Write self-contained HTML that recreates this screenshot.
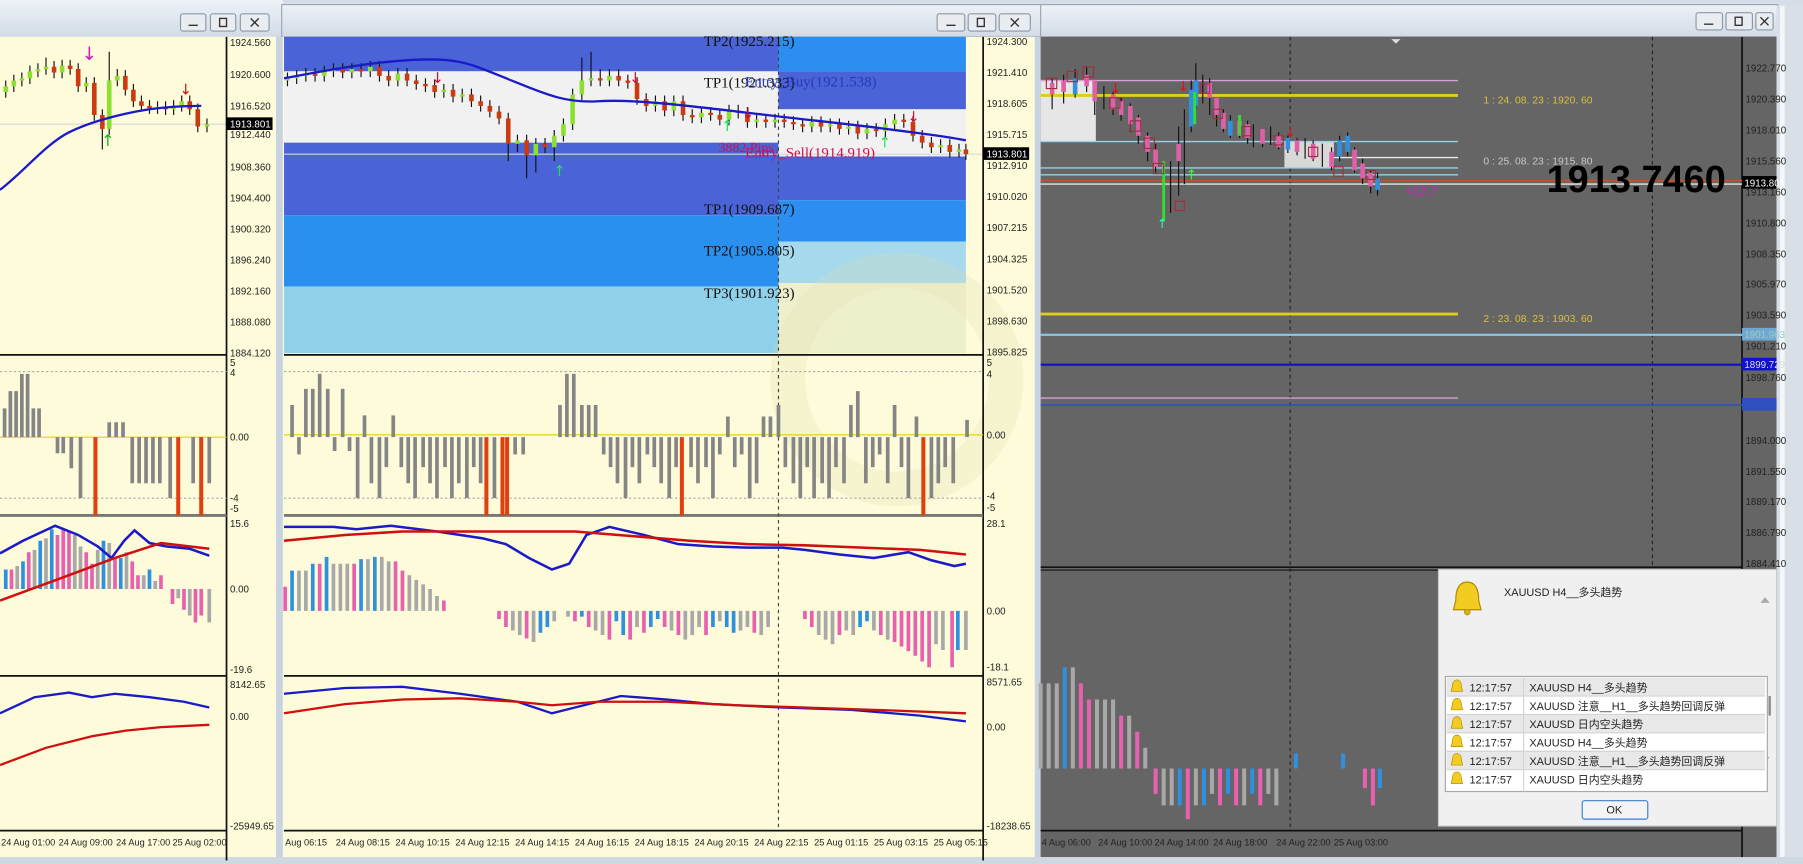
<!DOCTYPE html>
<html><head><meta charset="utf-8"><style>
html,body{margin:0;padding:0;width:1803px;height:864px;overflow:hidden;background:#d6dde6}
svg{display:block}
.ax{font-family:"Liberation Sans",sans-serif;font-size:8.5px;fill:#222}
.tl{font-family:"Liberation Sans",sans-serif;font-size:8px;fill:#222}
.tp{font-family:"Liberation Serif",serif;font-size:13px;fill:#111}
.al{font-family:"Liberation Sans","Noto Sans CJK SC",sans-serif;font-size:9.5px;fill:#222}
</style></head><body>
<svg width="1803" height="864" viewBox="0 0 1568 751" preserveAspectRatio="none" xmlns="http://www.w3.org/2000/svg">
<defs><linearGradient id="tb" x1="0" y1="0" x2="0" y2="1"><stop offset="0" stop-color="#eef2f7"/><stop offset="1" stop-color="#d2dbe6"/></linearGradient></defs>
<rect width="1568" height="751" fill="#d6dde6"/>
<rect x="0" y="0" width="246" height="32" fill="url(#tb)"/>
<rect x="245" y="4" width="661" height="28" fill="url(#tb)" stroke="#9aa6b4"/>
<rect x="905" y="4" width="641" height="28" fill="url(#tb)" stroke="#9aa6b4"/>
<g fill="#e9edf2" stroke="#8d98a6">
<rect x="157" y="12" width="22" height="15" rx="2"/><rect x="183" y="12" width="22" height="15" rx="2"/><rect x="209" y="12" width="25" height="15" rx="2"/>
<rect x="815" y="12" width="24" height="15" rx="2"/><rect x="842" y="12" width="24" height="15" rx="2"/><rect x="869" y="12" width="27" height="15" rx="2"/>
<rect x="1475" y="11" width="23" height="15" rx="2"/><rect x="1501" y="11" width="23" height="15" rx="2"/><rect x="1527" y="11" width="15" height="15" rx="2"/>
</g>
<g stroke="#333" stroke-width="1.2" fill="none">
<path d="M164 22h8M823 22h8M1482 21h8"/><rect x="191" y="16" width="6" height="7"/><rect x="850" y="16" width="6" height="7"/><rect x="1509" y="15" width="6" height="7"/>
<path d="M218 16l7 7M225 16l-7 7M879 16l7 7M886 16l-7 7M1531 15l7 7M1538 15l-7 7"/>
</g>
<rect x="0" y="32" width="240" height="716" fill="#fdfbd9"/>
<rect x="240" y="32" width="6" height="716" fill="#c9d4e2"/>
<rect x="246" y="32" width="654" height="716" fill="#fdfbd9"/>
<rect x="900" y="32" width="5" height="716" fill="#c9d4e2"/>
<rect x="905" y="32" width="640" height="713" fill="#656565"/>
<rect x="1545" y="5" width="23" height="746" fill="#d9dfe7"/>
<rect x="1548" y="5" width="4" height="740" fill="#f4f6f8"/>
<rect x="0" y="745" width="1568" height="6" fill="#cfd7e1"/>
<rect x="247" y="32" width="430" height="30" fill="#4a64d8"/>
<rect x="247" y="62" width="430" height="62" fill="#f1f1f1"/>
<rect x="247" y="124" width="430" height="63" fill="#4a64d8"/>
<rect x="247" y="187" width="430" height="62" fill="#2a90ee"/>
<rect x="247" y="249" width="430" height="58" fill="#8fd1ea"/>
<rect x="677" y="32" width="163" height="30" fill="#2c8ef0"/>
<rect x="677" y="62" width="163" height="33" fill="#4a64d8"/>
<rect x="677" y="95" width="163" height="41" fill="#f1f1f1"/>
<rect x="677" y="136" width="163" height="38" fill="#4a64d8"/>
<rect x="677" y="174" width="163" height="36" fill="#2c8ef0"/>
<rect x="677" y="210" width="163" height="36" fill="#a6d9ec"/>
<rect x="677" y="246" width="163" height="61" fill="#eef0cc"/>
<path d="M247 134H855M0 108H197" stroke="#d8d8d8" stroke-width="1"/>
<circle cx="780" cy="330" r="95" fill="none" stroke="#e2e0b0" stroke-width="30" opacity="0.25"/>
<g stroke="#111" stroke-width="1.5">
<path d="M0 308.5H197M247 308.5H855M0 587.5H197M247 587.5H855M0 722H197M247 722H855M197 32V748M855 32V748M1515 32V745M905 493H1515M905 722H1515"/>
</g>
<path d="M0 448H197M247 448H855" stroke="#777" stroke-width="2.5"/>
<path d="M905 495.5H1515" stroke="#111" stroke-width="1"/>
<path d="M677 32V722" stroke="#444" stroke-dasharray="3,3"/>
<path d="M1122 32V722M1437 32V493" stroke="#222" stroke-dasharray="3,3"/>
<path d="M0 323H197M0 433H197M247 323H855M247 433H855" stroke="#aaa" stroke-dasharray="2,2"/>
<path d="M0 380H197M247 378H855" stroke="#e6d400" stroke-width="1"/>
<path d="M5 70V85M12 65V80M19 63V75M26 57V73M33 55V67M40 50V65M47 53V68M54 52V68M61 52V65M68 55V80M75 67V80M82 67V105M89 95V130M95 45V117M102 60V75M109 61V83M116 73V93M123 83V97M130 87V99M137 88V99M144 88V100M151 87V100M158 83V97M165 83V100M172 90V115M180 103V115" stroke="#111" stroke-width="1"/>
<path d="M47 58V63M61 57V60M68 60V75M82 72V100M89 100V112M109 66V78M116 78V88M123 88V92M130 92V94M144 93V95M165 88V95M172 95V110" stroke="#cc3a10" stroke-width="4"/>
<path d="M5 75V80M12 70V75M19 68V70M26 62V68M33 60V62M40 58V60M54 57V63M75 72V75M95 70V112M102 66V70M137 93V95M151 92V95M158 88V92M180 108V110" stroke="#8ee030" stroke-width="4"/>
<path d="M0 165C20 150 40 125 60 115S110 98 130 95 170 92 175 92" stroke="#1a1ac8" stroke-width="2" fill="none"/>
<text x="71" y="52" font-size="16" fill="#e010c0" font-family="DejaVu Sans">↓</text>
<text x="156" y="82" font-size="13" fill="#d01010" font-family="DejaVu Sans">↓</text>
<text x="88" y="127" font-size="14" fill="#20b020" font-family="DejaVu Sans">↑</text>
<path d="M250 63V75M258 61V73M266 59V71M274 59V71M282 57V71M290 55V67M298 55V68M306 55V68M314 55V67M322 53V67M330 53V71M338 61V75M346 59V75M354 59V75M362 65V78M370 68V80M378 69V85M386 73V85M394 73V89M402 77V89M410 77V93M418 83V97M426 87V102M434 92V108M442 98V140M450 117V132M458 117V155M466 120V150M474 120V133M482 113V140M490 103V123M498 77V113M506 50V87M514 45V75M522 60V75M530 60V75M538 60V75M546 65V77M554 67V91M562 81V97M570 83V97M578 83V101M586 83V101M594 83V105M602 95V107M610 93V107M618 93V105M626 95V109M634 91V109M642 91V103M650 93V111M658 99V111M666 99V111M674 99V111M682 99V111M690 101V113M698 103V115M706 101V115M714 101V115M722 103V115M730 103V117M738 105V117M746 105V121M754 107V121M762 107V119M770 103V119M778 99V113M786 99V111M794 101V123M802 113V129M810 119V133M818 121V133M826 121V137M834 125V137M840 125V139" stroke="#111" stroke-width="1"/>
<path d="M274 64V66M298 60V63M314 60V62M330 58V66M338 66V70M354 64V70M362 70V73M370 73V75M378 74V80M394 78V84M410 82V88M418 88V92M426 92V97M434 97V103M442 103V125M458 122V135M474 125V128M522 68V70M538 66V70M546 70V72M554 72V86M562 86V92M578 88V96M594 88V100M602 100V102M618 98V100M626 100V104M642 96V98M650 98V106M666 104V106M682 104V106M690 106V108M698 108V110M714 106V110M730 108V112M746 110V116M762 112V114M786 104V106M794 106V118M802 118V124M810 124V128M826 126V132M840 130V134" stroke="#cc3a10" stroke-width="4"/>
<path d="M250 68V70M258 66V68M266 64V66M282 62V66M290 60V62M306 60V63M322 58V62M346 64V70M386 78V80M402 82V84M450 122V125M466 125V135M482 118V128M490 108V118M498 82V108M506 70V82M514 68V70M530 66V70M570 88V92M586 88V96M610 98V102M634 96V104M658 104V106M674 104V106M706 106V110M722 108V110M738 110V112M754 112V116M770 108V114M778 104V108M818 126V128M834 130V132" stroke="#8ee030" stroke-width="4"/>
<path d="M247 68C280 62 320 54 360 52S410 56 440 68 490 90 520 88 600 92 650 98 740 108 770 112 820 118 840 122" stroke="#1a1ac8" stroke-width="2" fill="none"/>
<text x="375" y="72" font-size="13" fill="#d01030" font-family="DejaVu Sans">↓</text>
<text x="547" y="72" font-size="13" fill="#d01030" font-family="DejaVu Sans">↓</text>
<text x="645" y="103" font-size="13" fill="#d01030" font-family="DejaVu Sans">↓</text>
<text x="789" y="106" font-size="13" fill="#d01030" font-family="DejaVu Sans">↓</text>
<text x="481" y="153" font-size="13" fill="#20e060" font-family="DejaVu Sans">↑</text>
<text x="627" y="114" font-size="13" fill="#20e060" font-family="DejaVu Sans">↑</text>
<text x="764" y="128" font-size="13" fill="#20e060" font-family="DejaVu Sans">↑</text>
<text class="tp" x="612" y="40">TP2(1925.215)</text>
<text class="tp" x="612" y="76">TP1(1921.333)</text>
<text class="tp" x="648" y="75" style="fill:#2838b8">Entry_Buy(1921.538)</text>
<text class="tp" x="625" y="132" style="fill:#d0104a;font-size:12px">3882 Pips</text>
<text class="tp" x="648" y="137" style="fill:#d0104a">Entry_Sell(1914.919)</text>
<text class="tp" x="612" y="186">TP1(1909.687)</text>
<text class="tp" x="612" y="222">TP2(1905.805)</text>
<text class="tp" x="612" y="259">TP3(1901.923)</text>
<path d="M4 380V355M9 380V340M14 380V340M19 380V325M24 380V325M29 380V355M34 380V355M50 380V394M55 380V394M62 380V407M70 380V433M95 380V367M101 380V367M107 380V367M115 380V420M121 380V420M127 380V420M133 380V420M139 380V420M148 380V433M168 380V420M182 380V420M254 380V352M260 380V395M266 380V338M272 380V338M278 380V325M285 380V338M291 380V392M298 380V338M304 380V392M311 380V433M317 380V361M323 380V420M330 380V433M336 380V406M342 380V361M349 380V406M355 380V420M361 380V433M368 380V406M374 380V420M380 380V433M387 380V406M393 380V433M399 380V420M406 380V433M412 380V406M418 380V420M430 380V433M448 380V395M455 380V395M487 380V352M493 380V325M499 380V325M506 380V352M512 380V352M518 380V352M525 380V395M531 380V406M537 380V420M544 380V433M550 380V406M556 380V420M563 380V395M569 380V406M575 380V420M582 380V433M588 380V406M601 380V406M607 380V420M614 380V406M620 380V433M626 380V395M633 380V362M639 380V406M645 380V395M652 380V433M658 380V420M664 380V362M670 380V362M677 380V352M683 380V406M690 380V420M696 380V433M702 380V406M708 380V433M715 380V420M721 380V433M727 380V406M734 380V420M740 380V352M746 380V340M753 380V420M759 380V406M765 380V395M772 380V420M778 380V352M784 380V406M790 380V433M797 380V362M810 380V433M816 380V420M822 380V406M829 380V420M841 380V365" stroke="#858585" stroke-width="3.2"/>
<path d="M83 380V448M155 380V448M175 380V448M423 380V448M437 380V448M441 380V448M593 380V448M803 380V448" stroke="#e04010" stroke-width="3.5"/>
<g stroke-width="3.2">
<path d="M5 512V495M20 512V488M35 512V470M45 512V460M90 512V470M105 512V485M130 512V495" stroke="#3090e0"/>
<path d="M10 512V495M25 512V480M50 512V465M55 512V460M60 512V462M75 512V480M80 512V490M100 512V485M115 512V488M120 512V500M140 512V500M150 512V525M160 512V530M170 512V541M175 512V535" stroke="#e860b0"/>
<path d="M15 512V492M30 512V478M40 512V468M65 512V465M70 512V475M85 512V478M95 512V472M110 512V480M125 512V500M135 512V505M155 512V520M165 512V535M182 512V541" stroke="#a8a8a8"/>
</g>
<polyline points="0,481 20,470 48,457 68,465 85,475 97,485 108,470 117,461 130,472 145,475 165,477 182,483" stroke="#1a1ac8" stroke-width="2.2" fill="none"/>
<polyline points="0,522 60,500 100,485 140,472 182,477" stroke="#d01010" stroke-width="2.2" fill="none"/>
<g stroke-width="3.2">
<path d="M254 531V496M272 531V490M284 531V484M314 531V486M326 531V484M470 531V550M476 531V545M506 531V536M536 531V540M542 531V552M566 531V545M572 531V538M620 531V545M632 531V545M638 531V550M748 531V545M754 531V540M833 531V565" stroke="#3090e0"/>
<path d="M248 531V510M278 531V490M308 531V490M344 531V488M350 531V496M386 531V522M434 531V538M440 531V545M458 531V555M500 531V540M512 531V545M530 531V556M548 531V556M560 531V550M578 531V545M590 531V552M614 531V552M656 531V550M700 531V538M706 531V545M730 531V552M766 531V552M778 531V558M784 531V562M790 531V566M796 531V570M802 531V575M808 531V580M828 531V580" stroke="#e860b0"/>
<path d="M260 531V496M266 531V496M290 531V490M296 531V490M302 531V490M320 531V486M332 531V484M338 531V488M356 531V500M362 531V504M368 531V508M374 531V512M380 531V518M446 531V548M452 531V552M464 531V558M482 531V540M494 531V536M518 531V548M524 531V552M554 531V545M584 531V548M596 531V556M602 531V552M608 531V545M626 531V540M644 531V548M650 531V545M662 531V552M668 531V545M712 531V552M718 531V556M724 531V560M736 531V548M742 531V552M760 531V548M772 531V556M814 531V560M820 531V565M840 531V565" stroke="#a8a8a8"/>
</g>
<polyline points="247,458 290,458 310,460 340,457 380,462 420,468 440,473 460,485 480,495 495,490 510,465 530,458 560,465 590,473 620,475 650,476 680,476 700,478 730,482 760,485 790,480 810,487 830,492 840,490" stroke="#1a1ac8" stroke-width="2.2" fill="none"/>
<polyline points="247,470 300,465 350,462 450,462 500,462 550,466 600,470 650,473 700,474 750,476 800,478 840,482" stroke="#d01010" stroke-width="2.2" fill="none"/>
<polyline points="0,620 30,606 60,602 80,606 100,603 130,606 160,610 182,615" stroke="#1a1ac8" stroke-width="2" fill="none"/>
<polyline points="0,665 40,650 80,640 110,635 140,632 182,630" stroke="#d01010" stroke-width="2" fill="none"/>
<polyline points="247,603 300,598 350,597 400,603 450,610 480,620 500,615 540,605 580,608 620,612 680,615 740,617 800,622 840,627" stroke="#1a1ac8" stroke-width="2" fill="none"/>
<polyline points="247,620 300,612 350,608 400,607 450,610 480,613 520,610 580,610 640,613 700,615 760,617 840,620" stroke="#d01010" stroke-width="2" fill="none"/>
<rect x="905" y="70" width="48" height="53" fill="#e6e6e6"/>
<rect x="1117" y="123" width="43" height="23" fill="#d8d8d8"/>
<g stroke-width="1.2">
<path d="M905 70H1268" stroke="#d8a0d8"/>
<path d="M905 83H1268M905 273H1268" stroke="#e0cc20" stroke-width="2.5"/>
<path d="M905 123H1268M905 146H1268M905 152H1268" stroke="#9ad0e8"/>
<path d="M1160 137H1268M905 160H1515" stroke="#e8e8e8"/>
<path d="M905 157H1545" stroke="#c05030" stroke-width="1.8"/>
<path d="M905 291H1545" stroke="#8cc8e8" stroke-width="1.8"/>
<path d="M905 317H1545" stroke="#1010c0" stroke-width="1.8"/>
<path d="M905 346H1268" stroke="#d8a0d8"/>
<path d="M905 352H1545" stroke="#3050c0" stroke-width="1.5"/>
</g>
<path d="M915 68V95M925 65V90M935 60V85M945 58V80M952 70V100M960 75V95M968 80V100M975 85V105M983 90V115M990 100V125M998 115V140M1005 125V150M1018 140V185M1025 110V170M1030 95V160M1036 70V115M1040 55V95M1046 65V90M1052 68V100M1058 85V110M1064 95V115M1070 100V120M1078 102V120M1085 105V125M1090 108V128M1098 112V128M1105 110V126M1112 115V130M1120 118V133M1128 120V135M1135 120V138M1142 122V140M1150 125V145M1158 128V148M1165 118V140M1172 115V136M1178 128V150M1185 138V160M1192 148V168M1198 150V170" stroke="#111" stroke-width="1"/>
<path d="M915 72V82M925 70V80M945 65V75M952 70V88M968 82V95M975 88V100M983 92V108M990 102V118M998 118V132M1005 130V145M1025 125V140M1052 72V85M1058 85V100M1064 98V112M1078 105V118M1085 108V120M1098 112V125M1112 118V128M1128 122V132M1142 125V138M1158 132V145M1178 130V148M1185 142V155M1192 150V162" stroke="#e060a8" stroke-width="4"/>
<path d="M935 68V82M1036 78V110M1040 70V92M1070 105V118M1120 120V130M1165 122V136M1172 118V132M1198 155V165" stroke="#3090e0" stroke-width="4"/>
<path d="M1012 140V192M1039 80V108M1078 100V118" stroke="#30e030" stroke-width="2.5"/>
<g fill="none" stroke="#a03040" stroke-width="1">
<rect x="910" y="68" width="9" height="9"/><rect x="928" y="62" width="9" height="9"/><rect x="942" y="58" width="9" height="9"/><rect x="965" y="85" width="9" height="9"/><rect x="983" y="105" width="9" height="9"/><rect x="995" y="120" width="9" height="9"/><rect x="1003" y="142" width="9" height="9"/><rect x="1022" y="175" width="8" height="8"/><rect x="1044" y="73" width="8" height="8"/><rect x="1055" y="95" width="8" height="8"/><rect x="1080" y="110" width="8" height="8"/><rect x="1108" y="118" width="8" height="8"/><rect x="1138" y="128" width="8" height="8"/><rect x="1160" y="145" width="8" height="8"/><rect x="1188" y="148" width="8" height="8"/>
</g>
<text x="965" y="81" font-size="12" fill="#e01010" font-family="DejaVu Sans">↓</text>
<text x="1024" y="79" font-size="12" fill="#e01010" font-family="DejaVu Sans">↓</text>
<text x="1117" y="119" font-size="12" fill="#e01010" font-family="DejaVu Sans">↓</text>
<text x="1031" y="156" font-size="12" fill="#30ff30" font-family="DejaVu Sans">↑</text>
<text x="1006" y="198" font-size="11" fill="#30ffb0" font-family="DejaVu Sans">↑</text>
<text x="1290" y="90" font-family="Liberation Sans" font-size="9" fill="#d8c040">1 : 24. 08. 23 : 1920. 60</text>
<text x="1290" y="143" font-family="Liberation Sans" font-size="9" fill="#c8c8c8">0 : 25. 08. 23 : 1915. 80</text>
<text x="1290" y="280" font-family="Liberation Sans" font-size="9" fill="#d8c040">2 : 23. 08. 23 : 1903. 60</text>
<text x="1222" y="170" font-family="Liberation Sans" font-size="11" fill="#d020d0">&lt;12.7</text>
<text x="1345" y="167" font-family="Liberation Sans" font-size="33" font-weight="bold" fill="#000">1913.7460</text>
<path d="M1210 34l4 4 4-4z" fill="#ddd"/>
<g stroke-width="3.5">
<path d="M905 668V594M912 668V594M919 668V594M933 668V580M954 668V608M961 668V608M968 668V608M982 668V622M996 668V650M1012 668V700M1019 668V700M1040 668V700M1054 668V690M1082 668V700M1103 668V690M1110 668V700" stroke="#a8a8a8"/>
<path d="M926 668V580M1026 668V700M1047 668V700M1068 668V690M1089 668V690M1127 668V655M1168 668V655M1200 668V685" stroke="#3090e0"/>
<path d="M940 668V594M947 668V608M975 668V622M989 668V636M1005 668V690M1033 668V712M1061 668V700M1075 668V700M1096 668V700M1187 668V685M1194 668V700" stroke="#e860b0"/>
</g>
<g class="ax">
<text x="200" y="40">1924.560</text><text x="200" y="68">1920.600</text><text x="200" y="95">1916.520</text><text x="200" y="120">1912.440</text><text x="200" y="148">1908.360</text><text x="200" y="175">1904.400</text><text x="200" y="202">1900.320</text><text x="200" y="229">1896.240</text><text x="200" y="256">1892.160</text><text x="200" y="283">1888.080</text><text x="200" y="310">1884.120</text>
<text x="200" y="318">5</text><text x="200" y="327">4</text><text x="200" y="383">0.00</text><text x="200" y="436">-4</text><text x="200" y="445">-5</text>
<text x="200" y="458">15.6</text><text x="200" y="515">0.00</text><text x="200" y="585">-19.6</text>
<text x="200" y="598">8142.65</text><text x="200" y="626">0.00</text><text x="200" y="721">-25949.65</text>
<text x="858" y="39">1924.300</text><text x="858" y="66">1921.410</text><text x="858" y="93">1918.605</text><text x="858" y="120">1915.715</text><text x="858" y="147">1912.910</text><text x="858" y="174">1910.020</text><text x="858" y="201">1907.215</text><text x="858" y="228">1904.325</text><text x="858" y="255">1901.520</text><text x="858" y="282">1898.630</text><text x="858" y="309">1895.825</text>
<text x="858" y="318">5</text><text x="858" y="328">4</text><text x="858" y="381">0.00</text><text x="858" y="434">-4</text><text x="858" y="444">-5</text>
<text x="858" y="458">28.1</text><text x="858" y="534">0.00</text><text x="858" y="583">-18.1</text>
<text x="858" y="596">8571.65</text><text x="858" y="635">0.00</text><text x="858" y="721">-18238.65</text>
<text x="1518" y="62">1922.770</text><text x="1518" y="89">1920.390</text><text x="1518" y="116">1918.010</text><text x="1518" y="143">1915.560</text><text x="1518" y="170">1913.160</text><text x="1518" y="197">1910.800</text><text x="1518" y="224">1908.350</text><text x="1518" y="250">1905.970</text><text x="1518" y="277">1903.590</text><text x="1518" y="304">1901.210</text><text x="1518" y="331">1898.760</text><text x="1518" y="386">1894.000</text><text x="1518" y="413">1891.550</text><text x="1518" y="439">1889.170</text><text x="1518" y="466">1886.790</text><text x="1518" y="493">1884.410</text>
</g>
<rect x="197" y="102" width="40" height="11" fill="#000"/><text class="ax" x="200" y="111" style="fill:#fff">1913.801</text>
<rect x="855" y="128" width="40" height="11" fill="#000"/><text class="ax" x="858" y="137" style="fill:#fff">1913.801</text>
<rect x="1515" y="153" width="30" height="11" fill="#000"/><text class="ax" x="1517" y="162" style="fill:#fff">1913.801</text>
<rect x="1515" y="285" width="30" height="11" fill="#70a8d0"/><text class="ax" x="1517" y="294" style="fill:#9cc">1901.963</text>
<rect x="1515" y="311" width="30" height="11" fill="#1010d0"/><text class="ax" x="1517" y="320" style="fill:#ddd">1899.729</text>
<rect x="1515" y="346" width="30" height="11" fill="#3050c0"/>
<g class="tl">
<text x="1" y="735">24 Aug 01:00</text><text x="51" y="735">24 Aug 09:00</text><text x="101" y="735">24 Aug 17:00</text><text x="150" y="735">25 Aug 02:00</text>
<text x="248" y="735">Aug 06:15</text><text x="292" y="735">24 Aug 08:15</text><text x="344" y="735">24 Aug 10:15</text><text x="396" y="735">24 Aug 12:15</text><text x="448" y="735">24 Aug 14:15</text><text x="500" y="735">24 Aug 16:15</text><text x="552" y="735">24 Aug 18:15</text><text x="604" y="735">24 Aug 20:15</text><text x="656" y="735">24 Aug 22:15</text><text x="708" y="735">25 Aug 01:15</text><text x="760" y="735">25 Aug 03:15</text><text x="812" y="735">25 Aug 05:15</text>
<text x="906" y="735">4 Aug 06:00</text><text x="955" y="735">24 Aug 10:00</text><text x="1004" y="735">24 Aug 14:00</text><text x="1055" y="735">24 Aug 18:00</text><text x="1110" y="735">24 Aug 22:00</text><text x="1160" y="735">25 Aug 03:00</text>
</g>
<rect x="1251" y="495" width="294" height="223" fill="#f0f0f0" stroke="#c8c8c8"/>
<path d="M1276 506C1268 506 1266 514 1266 522L1264 530L1288 530L1286 522C1286 514 1284 506 1276 506Z" fill="#f2cc20" stroke="#b08a00"/>
<circle cx="1276" cy="532" r="2.5" fill="#e0b010" stroke="#b08a00" stroke-width="0.6"/>
<text class="al" x="1308" y="518">XAUUSD  H4__多头趋势</text>
<path d="M1531 524l4-5 4 5zM1531 658l4 5 4-5z" fill="#aaa"/>
<rect x="1257" y="588" width="280" height="100" fill="#fff" stroke="#a8a8a8"/>
<g fill="#e8e8e8"><rect x="1258" y="589" width="277" height="16"/><rect x="1258" y="621" width="277" height="16"/><rect x="1258" y="653" width="277" height="16"/></g>
<path d="M1325 589V688M1258 605H1535M1258 621H1535M1258 637H1535M1258 653H1535M1258 669H1535" stroke="#d4d4d4"/>
<path d="M1539 605V622" stroke="#888" stroke-width="2"/>
<g fill="#f2cc20" stroke="#b08a00" stroke-width="0.6">
<path d="M1267 591c-3 0-4 3-4 6l-1 4h10l-1-4c0-3-1-6-4-6z"/><path d="M1267 607c-3 0-4 3-4 6l-1 4h10l-1-4c0-3-1-6-4-6z"/><path d="M1267 623c-3 0-4 3-4 6l-1 4h10l-1-4c0-3-1-6-4-6z"/><path d="M1267 639c-3 0-4 3-4 6l-1 4h10l-1-4c0-3-1-6-4-6z"/><path d="M1267 655c-3 0-4 3-4 6l-1 4h10l-1-4c0-3-1-6-4-6z"/><path d="M1267 671c-3 0-4 3-4 6l-1 4h10l-1-4c0-3-1-6-4-6z"/>
</g>
<g class="al">
<text x="1278" y="601">12:17:57</text><text x="1330" y="601">XAUUSD  H4__多头趋势</text>
<text x="1278" y="617">12:17:57</text><text x="1330" y="617">XAUUSD  注意__H1__多头趋势回调反弹</text>
<text x="1278" y="633">12:17:57</text><text x="1330" y="633">XAUUSD  日内空头趋势</text>
<text x="1278" y="649">12:17:57</text><text x="1330" y="649">XAUUSD  H4__多头趋势</text>
<text x="1278" y="665">12:17:57</text><text x="1330" y="665">XAUUSD  注意__H1__多头趋势回调反弹</text>
<text x="1278" y="681">12:17:57</text><text x="1330" y="681">XAUUSD  日内空头趋势</text>
</g>
<rect x="1376" y="696" width="57" height="16" rx="2" fill="#f4f4f4" stroke="#3c7fd0"/>
<text class="al" x="1397" y="707">OK</text>
</svg>
</body></html>
